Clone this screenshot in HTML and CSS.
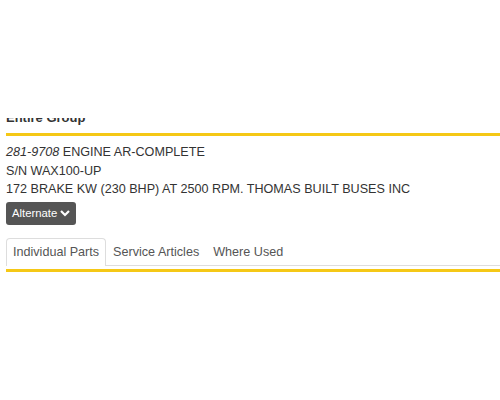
FILE: index.html
```html
<!DOCTYPE html>
<html lang="en">
<head>
    <meta charset="UTF-8">
    <title>Entire Group</title>
    <link rel="stylesheet" href="styles.css">
</head>
<body>
<div class="top-bar"></div>
<div class="container">
    <h4 class="group-title">Entire Group</h4>
    <div class="group-info">
        <p><em>281-9708</em> ENGINE AR-COMPLETE</p>
        <p>S/N WAX100-UP</p>
        <p>172 BRAKE KW (230 BHP) AT 2500 RPM. THOMAS BUILT BUSES INC</p>
        <button class="alt-btn">Alternate
            <svg width="10" height="8" viewBox="0 0 10 8"><path d="M1 2 L5 6 L9 2" fill="none" stroke="#fff" stroke-width="2.2"/></svg>
        </button>
    </div>
    <ul class="tabs">
        <li class="active">Individual Parts</li>
        <li>Service Articles</li>
        <li>Where Used</li>
    </ul>
    <div class="tab-line"></div>
</div>
</body>
</html>
```

FILE: styles.css
```css
/*reset*/
body,h1,h2,h3,h4,h5,h6,p,ul,li,button{
    padding: 0;
    margin: 0;
}
body{
    font-family: "Liberation Sans", Arial, sans-serif;
    font-size: 12.6px;
    color: #333;
    background: #fff;
}
.top-bar{
    position: fixed;
    top: 0;
    left: 0;
    right: 0;
    height: 118px;
    background: #fff;
    z-index: 10;
}
.container{
    padding: 108px 0 0 6px;
}
.group-title{
    font-size: 13px;
    line-height: 20px;
    padding-bottom: 5px;
    border-bottom: 3px solid #f5c816;
}
.group-info{
    padding-top: 7px;
    line-height: 18.5px;
}
.alt-btn{
    display: flex;
    align-items: center;
    gap: 3px;
    margin-top: 3px;
    height: 23px;
    padding: 0 6px;
    background: #555;
    color: #fff;
    border: none;
    border-radius: 3px;
    font-family: inherit;
    font-size: 11.3px;
}
.tabs{
    list-style: none;
    display: flex;
    margin-top: 13px;
    border-bottom: 1px solid #ddd;
}
.tabs li{
    padding: 6px 6px;
    line-height: 14px;
    color: #555;
    border: 1px solid transparent;
    border-bottom: none;
    border-radius: 4px 4px 0 0;
    margin-bottom: -1px;
}
.tabs li.active{
    border-color: #ddd;
    background: #fff;
    padding-bottom: 7px;
}
.tab-line{
    margin-top: 3px;
    border-top: 3px solid #f5c816;
}
```
